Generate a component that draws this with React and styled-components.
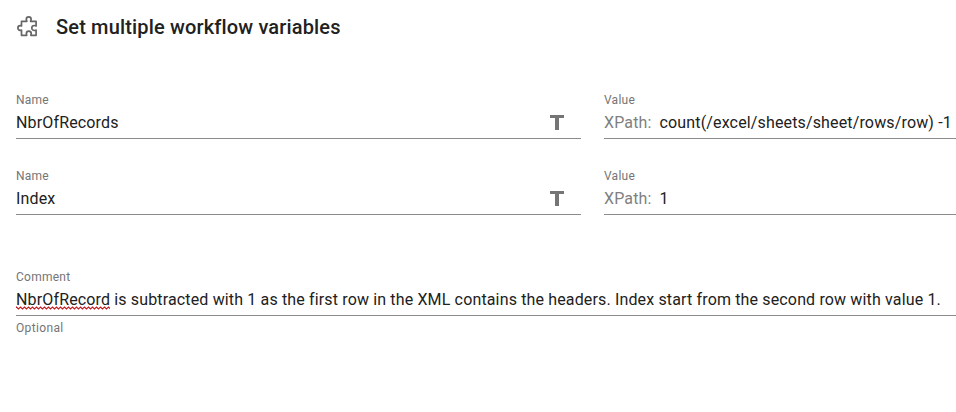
import React from 'react';
import styled, { createGlobalStyle } from 'styled-components';

const GlobalStyle = createGlobalStyle`
  * {
    box-sizing: border-box;
  }

  body {
    margin: 0;
    background: #fff;
    color: #212121;
    font-family: Roboto, "Liberation Sans", sans-serif;
    overflow: hidden;
  }
`;

const Page = styled.main`
  height: 412px;
  padding: 14px 0 0 16px;
`;

const Header = styled.header`
  display: flex;
  align-items: center;
  gap: 16px;
  height: 26px;
  margin-bottom: 53px;
`;

const Title = styled.h1`
  margin: 0;
  font-size: 20px;
  font-weight: 500;
  line-height: 26px;
  letter-spacing: 0.16px;
`;

const Row = styled.div`
  display: grid;
  grid-template-columns: 565px 1fr;
  column-gap: 23px;
  height: 76px;
`;

const Field = styled.div`
  display: flex;
  flex-direction: column;
`;

const Label = styled.label`
  font-size: 12px;
  line-height: 14px;
  letter-spacing: 0.25px;
  color: #757575;
`;

const Control = styled.div`
  display: flex;
  align-items: center;
  height: 32px;
  border-bottom: 1px solid #8c8c8c;
  font-size: 16px;
  letter-spacing: 0.147px;
  white-space: pre;
`;

const Prefix = styled.span`
  margin-right: 8px;
  color: #808080;
`;

const TypeIcon = styled.svg`
  margin: 0 16px 0 auto;
`;

const CommentField = styled(Field)`
  margin-top: 25px;
`;

/* Tight zigzag under a misspelled word, 4px per wave */
const Misspelled = styled.span`
  padding: 1px 0;
  background: url("data:image/svg+xml,%3Csvg xmlns='http://www.w3.org/2000/svg' width='4' height='4'%3E%3Cpath d='M-1.5 3L.5 1L2.5 3L4.5 1L6.5 3' fill='none' stroke='%23c4161c' stroke-width='1.1'/%3E%3C/svg%3E") repeat-x left bottom;
`;

const Hint = styled.span`
  margin-top: 5px;
  font-size: 12px;
  line-height: 14px;
  letter-spacing: 0.35px;
  color: #757575;
`;

const variables = [
    { name: 'NbrOfRecords', value: 'count(/excel/sheets/sheet/rows/row) -1' },
    { name: 'Index', value: '1' },
];

const App = () => {
    return (
        <Page>
            <GlobalStyle />
            <Header>
                <svg
                    width="24"
                    height="24"
                    viewBox="0 0 24 24"
                    fill="none"
                    stroke="#666"
                    strokeWidth="1.7"
                    strokeLinejoin="round"
                >
                    <path d="M5.5 6.3H10.8C10.8 5.6 10.3 5.2 10.3 4.3A2.4 2.4 0 0 1 15.1 4.3C15.1 5.2 14.6 5.6 14.6 6.3H20.1V10.9C19.5 10.9 19.1 10.5 18.3 10.5A2.5 2.5 0 0 0 18.3 15.5C19.1 15.5 19.5 15.1 20.1 15.1V20.3H14.9C14.9 19.7 15.2 19.3 15.2 18.6A2.4 2.4 0 0 0 10.4 18.6C10.4 19.3 10.7 19.7 10.7 20.3H5.5V15C4.9 15 4.7 15.4 4.1 15.4A2.2 2.4 0 0 1 4.1 10.6C4.7 10.6 4.9 11 5.5 11Z" />
                </svg>
                <Title>Set multiple workflow variables</Title>
            </Header>

            {variables.map(({ name, value }) => (
                <Row key={name}>
                    <Field>
                        <Label>Name</Label>
                        <Control>
                            {name}
                            <TypeIcon width="16" height="17" viewBox="0 0 16 17" fill="#757575">
                                <path d="M1 1h14v3H10v12H6V4H1z" />
                            </TypeIcon>
                        </Control>
                    </Field>
                    <Field>
                        <Label>Value</Label>
                        <Control>
                            <Prefix>XPath:</Prefix>
                            {value}
                        </Control>
                    </Field>
                </Row>
            ))}

            <CommentField>
                <Label>Comment</Label>
                <Control>
                    <Misspelled>NbrOfRecord</Misspelled>
                    {' is subtracted with 1 as the first row in the XML contains the headers. Index start from the second row with value 1.'}
                </Control>
                <Hint>Optional</Hint>
            </CommentField>
        </Page>
    );
};

export default App;
